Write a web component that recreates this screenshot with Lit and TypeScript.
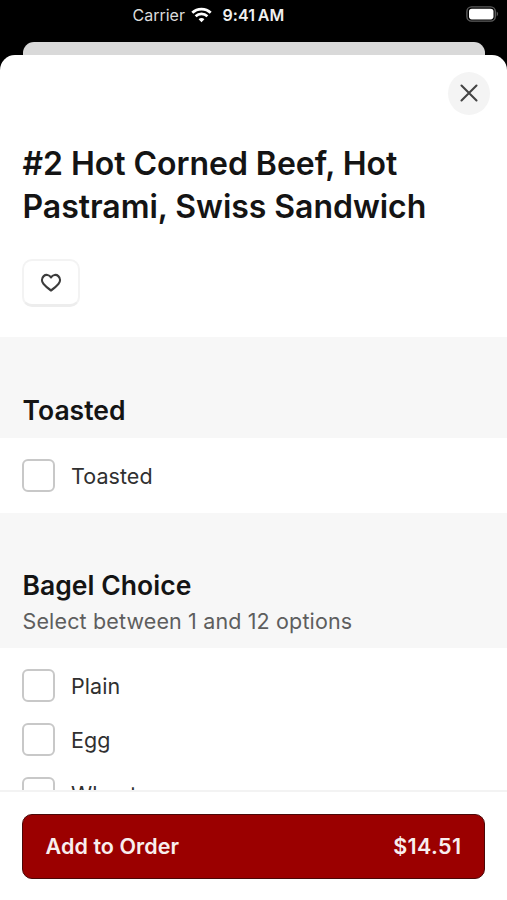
import { LitElement, html, css } from "lit";
import { customElement, property } from "lit/decorators.js";

interface Group {
  title: string;
  hint?: string;
  options: string[];
}

const groups: Group[] = [
  { title: "Toasted", options: ["Toasted"] },
  {
    title: "Bagel Choice",
    hint: "Select between 1 and 12 options",
    options: ["Plain", "Egg", "Wheat"],
  },
];

@customElement("status-bar")
class StatusBar extends LitElement {
  static styles = css`
    :host {
      display: grid;
      grid-template-columns: 1fr auto 1fr;
      height: 30px;
      padding: 0 8px 0 132.5px;
      box-sizing: border-box;
      color: #fff;
      font-size: 16px;
      line-height: 30px;
    }
    .left {
      display: flex;
      align-items: center;
      white-space: nowrap;
      grid-column: 1 / 3;
    }
    .carrier {
      width: 58px;
      color: #dcdcdc;
      letter-spacing: 0;
    }
    .wifi {
      width: 21px;
      height: 16px;
      margin-right: 11px;
      margin-top: -1px;
    }
    .time {
      font-weight: 600;
      letter-spacing: 0.1px;
      word-spacing: -1.6px;
      color: #f0f0f0;
    }
    .battery {
      justify-self: end;
      align-self: center;
      width: 33px;
      height: 16px;
      margin-top: -2px;
    }
  `;
  render() {
    return html`
      <div class="left">
        <span class="carrier">Carrier</span>
        <svg class="wifi" viewBox="0 0 21 16" fill="none" stroke="#fff" stroke-width="2.7">
          <path d="M1.3 5.8C6.3.8 14.7.8 19.7 5.8" />
          <path d="M4.6 9.3C8 6.1 13 6.1 16.4 9.3" />
          <path d="M10.5 15.3 7.6 12.2c1.6-1.5 4.2-1.5 5.8 0z" fill="#fff" stroke="none" />
        </svg>
        <span class="time">9:41 AM</span>
      </div>
      <svg class="battery" viewBox="0 0 33 16">
        <rect x=".9" y=".9" width="28.4" height="14.2" rx="4.6" fill="none" stroke="#5c5c5c" stroke-width="1.4" />
        <rect x="3" y="2.8" width="24.5" height="10.6" rx="2.8" fill="#fff" />
        <path d="M30.7 5.6c1.8.8 1.8 4 0 4.8z" fill="#5c5c5c" />
      </svg>
    `;
  }
}

@customElement("option-group")
class OptionGroup extends LitElement {
  @property({ attribute: false }) group!: Group;
  static styles = css`
    :host {
      display: block;
    }
    .head {
      background: #f7f7f7;
      padding: 56px 22.5px 11px;
    }
    .head.hinted {
      padding-top: 55px;
      padding-bottom: 12px;
    }
    .title {
      margin: 0;
      font-size: 26.5px;
      line-height: 34px;
      font-weight: 600;
      color: #141414;
      letter-spacing: 0.03px;
    }
    .hint {
      margin: 4px 0 0;
      font-size: 21.5px;
      line-height: 30px;
      letter-spacing: 0.14px;
      color: #5e5e5e;
    }
    .options {
      display: flex;
      flex-direction: column;
      gap: 21px;
      padding: 21px 22px;
    }
    .option {
      display: flex;
      align-items: center;
      gap: 16px;
      height: 33px;
      font-size: 21.5px;
      letter-spacing: 0.05px;
      color: #303030;
    }
    .box {
      width: 33px;
      height: 33px;
      box-sizing: border-box;
      border: 2px solid #c8c8c8;
      border-radius: 6px;
      background: #fff;
    }
    .caption {
      padding-top: 1px;
    }
  `;
  render() {
    const { title, hint, options } = this.group;
    return html`
      <div class="head ${hint ? "hinted" : ""}">
        <h2 class="title">${title}</h2>
        ${hint ? html`<p class="hint">${hint}</p>` : ""}
      </div>
      <div class="options">
        ${options.map(
          (name) => html`<label class="option"><span class="box"></span><span class="caption">${name}</span></label>`
        )}
      </div>
    `;
  }
}

@customElement("app-root")
class AppRoot extends LitElement {
  static styles = css`
    :host {
      display: flex;
      flex-direction: column;
      height: 900px;
      overflow: hidden;
      background: #000;
      font-family: Inter, "Liberation Sans", sans-serif;
    }
    .behind {
      flex: none;
      height: 13px;
      margin: 11.5px 22px 0 23px;
      border-radius: 11px 11px 0 0;
      background: #d9d9d9;
    }
    .sheet {
      flex: 1;
      min-height: 0;
      display: flex;
      flex-direction: column;
      background: #fff;
      border-radius: 15px 15px 0 0;
    }
    .scroll {
      flex: 1;
      min-height: 0;
      overflow: hidden;
    }
    .top {
      display: flex;
      justify-content: flex-end;
      padding: 17px 17px 0 0;
    }
    .close {
      display: grid;
      place-items: center;
      width: 42px;
      height: 43px;
      padding: 0;
      border: 0;
      border-radius: 50%;
      background: #f4f4f4;
    }
    .close svg {
      width: 18px;
      height: 18px;
    }
    .name {
      margin: 27px 22.5px 0;
      font-size: 32px;
      line-height: 43.5px;
      font-weight: 600;
      letter-spacing: -0.04px;
      color: #141414;
    }
    .fav {
      display: grid;
      place-items: center;
      width: 58px;
      height: 48px;
      margin: 30px 22px;
      padding: 1px 0 0;
      box-sizing: border-box;
      border: 2px solid #f3f3f3;
      border-bottom: 3px solid #ededed;
      border-radius: 10px;
      background: #fff;
    }
    .fav svg {
      width: 22px;
      height: 20px;
    }
    option-group + option-group {
      margin-top: 0.5px;
    }
    .footer {
      flex: none;
      height: 110px;
      box-sizing: border-box;
      padding: 22px 22px 21px;
      border-top: 2px solid #f3f3f3;
      background: #fff;
    }
    .add {
      display: flex;
      align-items: center;
      justify-content: space-between;
      width: 100%;
      height: 65px;
      box-sizing: border-box;
      padding: 0 22.5px 1px;
      border: 1.5px solid #4a0808;
      border-radius: 10px;
      background: #9b0000;
      color: #f8eeee;
      font: inherit;
      font-size: 21.5px;
      font-weight: 600;
      letter-spacing: 0.08px;
    }
    .price {
      letter-spacing: 0.4px;
    }
  `;
  render() {
    return html`
      <status-bar></status-bar>
      <div class="behind"></div>
      <main class="sheet">
        <div class="scroll">
          <div class="top">
            <button class="close" aria-label="Close">
              <svg viewBox="0 0 18 18" fill="none" stroke="#444" stroke-width="2.1" stroke-linecap="round">
                <path d="M1.5 1.5l15 15M16.5 1.5l-15 15" />
              </svg>
            </button>
          </div>
          <h1 class="name">#2 Hot Corned Beef, Hot Pastrami, Swiss Sandwich</h1>
          <button class="fav" aria-label="Favorite">
            <svg viewBox="0 0 22 20" fill="none" stroke="#3c3c3c" stroke-width="2.2" stroke-linejoin="round">
              <path d="M11 4.3C9.1 1.6 5.7 1.3 3.7 3.1 1.4 5.2 1.6 8.5 3.5 10.9 5.3 13.2 8.3 15.6 11 17.5c2.7-1.9 5.7-4.3 7.5-6.6 1.9-2.4 2.1-5.7-.2-7.8C16.3 1.3 12.9 1.6 11 4.3z" />
            </svg>
          </button>
          ${groups.map((group) => html`<option-group .group=${group}></option-group>`)}
        </div>
        <footer class="footer">
          <button class="add"><span>Add to Order</span><span class="price">$14.51</span></button>
        </footer>
      </main>
    `;
  }
}
